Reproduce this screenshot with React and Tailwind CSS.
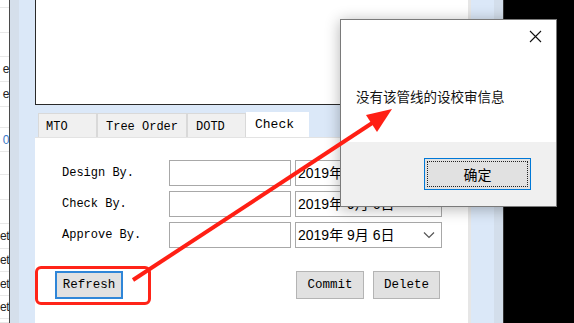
import React from 'react'

const LEFT_ROWS = [
  { h: 8, t: '' },
  { h: 25, t: '' },
  { h: 24, t: '' },
  { h: 25, t: 'e' },
  { h: 25, t: 'e' },
  { h: 21, t: '' },
  { h: 24, t: '0', blue: true },
  { h: 23, t: '' },
  { h: 25, t: '' },
  { h: 24, t: '' },
  { h: 25, t: 'et' },
  { h: 23, t: 'et' },
  { h: 24, t: 'et' },
  { h: 23, t: 'et' },
  { h: 4, t: '' },
]

const TABS = [
  { name: 'MTO', w: 'w-[59px]', pl: 'pl-[7px]' },
  { name: 'Tree Order', w: 'w-[90px]', pl: 'pl-[8px]' },
  { name: 'DOTD', w: 'w-[59px]', pl: 'pl-[8px]' },
]

const FIELDS = ['Design By.', 'Check By.', 'Approve By.']

const mono = "font-['Liberation_Mono','Noto_Sans_CJK_SC',monospace]"
const cjk = "font-['Noto_Sans_CJK_SC',sans-serif]"

function DatePicker() {
  return (
    <div className="w-[147px] h-[26px] border border-[#a8a8a8] bg-white flex items-center pl-[2px] pr-[6px]">
      <span className={`flex-1 text-[14px] text-black leading-none font-['Liberation_Sans','Noto_Sans_CJK_SC',sans-serif]`}>
        2019年&nbsp;9月&nbsp;6日
      </span>
      <svg width="12" height="8" viewBox="0 0 12 8">
        <polyline points="1,1.5 6,6.5 11,1.5" fill="none" stroke="#555" strokeWidth="1.2" />
      </svg>
    </div>
  )
}

function Btn({ children, focus, w = 'w-[68px]' }) {
  return (
    <button
      className={`${w} h-[28px] bg-[#e1e1e1] text-[12.5px] text-black ${mono} ${
        focus ? 'border-2 border-[#2f86d8]' : 'border border-[#b4b4b4]'
      }`}
    >
      {children}
    </button>
  )
}

export default function App() {
  return (
    <div className="relative w-[574px] h-[323px] overflow-hidden bg-black flex">
      {/* left list strip */}
      <div className="w-[9px] h-full bg-white flex flex-col overflow-hidden">
        {LEFT_ROWS.map((r, i) => (
          <div
            key={i}
            style={{ height: r.h }}
            className="shrink-0 border-b border-[#e8e8e8] flex items-center justify-end overflow-hidden"
          >
            <span className={`text-[12px] tracking-[-0.5px] whitespace-nowrap font-['Liberation_Sans',sans-serif] ${r.blue ? 'text-[#3c78c8]' : 'text-[#222]'}`}>
              {r.t}
            </span>
          </div>
        ))}
      </div>
      <div className="w-px h-full bg-[#4a4a4a]" />
      <div className="w-[9px] h-full bg-[#d5dfeb]" />
      <div className="w-[16px] h-full bg-[#dbe8f8]" />

      {/* main column */}
      <div className="w-[433px] h-full flex flex-col">
        <div className="h-[105px] bg-white border-l border-b border-[#2a2a2a]" />
        <div className="h-[32px] bg-[#dbe8f8] flex items-end pl-[3px]">
          {TABS.map((t) => (
            <div
              key={t.name}
              className={`${t.w} ${t.pl} h-[24px] pt-[2px] bg-[#f0f0f0] border border-b-0 border-[#d9d9d9] flex items-center text-[12px] text-black ${mono}`}
            >
              {t.name}
            </div>
          ))}
          <div className={`w-[63px] h-[25px] pl-[9px] bg-white flex items-start pt-[3px] text-[13px] text-black ${mono}`}>
            Check
          </div>
        </div>
        <div className="flex-1 bg-white border-t border-[#e3e3e3] flex flex-col pt-[22px]">
          <div className="flex flex-col gap-[5px] pl-[27px]">
            {FIELDS.map((f) => (
              <div key={f} className="flex items-center h-[26px]">
                <span className={`w-[107px] text-[12px] text-black ${mono}`}>{f}</span>
                <div className="w-[122px] h-[26px] border border-[#a8a8a8] bg-white" />
                <div className="w-[4px]" />
                <DatePicker />
              </div>
            ))}
          </div>
          <div className="flex items-center mt-[23px] pl-[20px]">
            <Btn focus w="w-[68px]">Refresh</Btn>
            <div className="w-[173px]" />
            <Btn>Commit</Btn>
            <div className="w-[9px]" />
            <Btn w="w-[67px]">Delete</Btn>
          </div>
        </div>
      </div>

      {/* right edge */}
      <div className="w-[3px] h-full bg-[#e6e6e6]" />
      <div className="w-[23px] h-full bg-[#dbe8f8]" />
      <div className="w-[9px] h-full bg-[#d3deeb]" />
      <div className="w-px h-full bg-[#333]" />

      {/* red highlight box */}
      <div className="absolute left-[35px] top-[266px] w-[116px] h-[39px] border-[3px] border-[#ff2418] rounded-[6px]" />

      {/* message box */}
      <div className="absolute left-[340px] top-[19px] w-[217px] h-[188px] border border-[#7a7a7a] bg-white flex flex-col shadow-[0_2px_14px_rgba(0,0,0,0.3)]">
        <div className="h-[122px] relative">
          <svg className="absolute left-[188px] top-[10px]" width="13" height="13" viewBox="0 0 13 13">
            <path d="M1 1 L12 12 M12 1 L1 12" stroke="#111" strokeWidth="1.1" />
          </svg>
          <div className={`absolute left-[15px] top-[66px] text-[13.5px] text-[#111] ${cjk}`}>
            没有该管线的设校审信息
          </div>
        </div>
        <div className="flex-1 bg-[#f0f0f0] flex justify-end pt-[16px] pr-[25px]">
          <button className={`relative w-[107px] h-[32px] bg-[#e1e1e1] border border-[#0078d7] text-[14px] text-black ${cjk}`}>
            <span className="absolute inset-[2px] border border-dotted border-[#222]" />
            确定
          </button>
        </div>
      </div>

      {/* red arrow */}
      <svg className="absolute left-0 top-0 pointer-events-none" width="574" height="323" viewBox="0 0 574 323">
        <line x1="133" y1="280" x2="373" y2="122.5" stroke="#ff1f14" strokeWidth="4" />
        <polygon points="392,109 366,115 377,132" fill="#ff1f14" />
      </svg>
    </div>
  )
}
